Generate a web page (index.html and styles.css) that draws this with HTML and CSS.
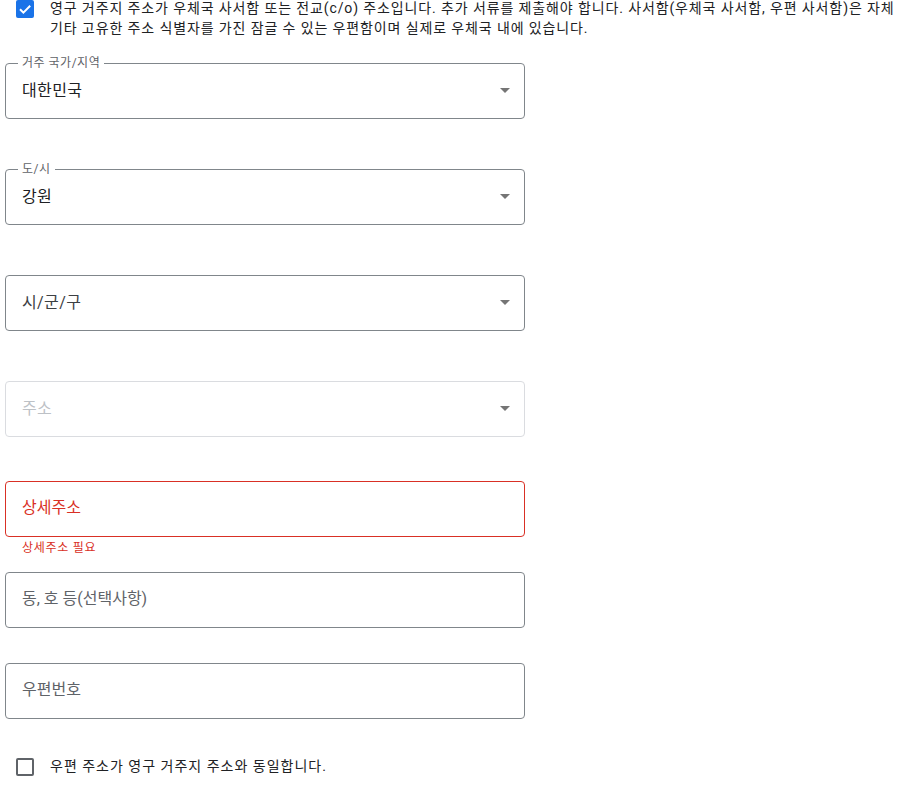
FILE: index.html
```html
<!DOCTYPE html>
<html lang="ko">
<head>
    <meta charset="UTF-8">
    <meta name="viewport" content="width=device-width, initial-scale=1.0">
    <title>주소 정보</title>
    <link rel="stylesheet" href="styles.css">
</head>
<body>

<div class="notice">
    <span class="box box-checked">
        <svg width="18" height="18" viewBox="0 0 18 18"><path d="M4 9.3l3.4 3.4L14.2 5.8" fill="none" stroke="#fff" stroke-width="2"/></svg>
    </span>
    <p class="notice-text">영구 거주지 주소가 우체국 사서함 또는 전교(c/o) 주소입니다. 추가 서류를 제출해야 합니다. 사서함(우체국 사서함, 우편 사서함)은 자체<br>기타 고유한 주소 식별자를 가진 잠글 수 있는 우편함이며 실제로 우체국 내에 있습니다.</p>
</div>

<form class="form">
    <!-- 거주 국가 -->
    <div class="field gap-50">
        <span class="float-label">거주 국가/지역</span>
        <span class="value">대한민국</span>
        <span class="arrow"></span>
    </div>

    <div class="field gap-50">
        <span class="float-label">도/시</span>
        <span class="value">강원</span>
        <span class="arrow"></span>
    </div>

    <div class="field gap-50">
        <span class="value placeholder-dark">시/군/구</span>
        <span class="arrow"></span>
    </div>

    <div class="field field-disabled gap-44">
        <span class="value">주소</span>
        <span class="arrow"></span>
    </div>

    <!-- 상세주소 (오류) -->
    <div class="field field-error">
        <input type="text" placeholder="상세주소">
    </div>
    <div class="helper-error">상세주소 필요</div>

    <div class="field gap-35">
        <input type="text" placeholder="동, 호 등(선택사항)">
    </div>

    <div class="field gap-38">
        <input type="text" placeholder="우편번호">
    </div>
</form>

<div class="same-row">
    <span class="box"></span>
    <span class="same-text">우편 주소가 영구 거주지 주소와 동일합니다.</span>
</div>

</body>
</html>
```

FILE: styles.css
```css
body {
    margin: 0;
    background-color: #fff;
    color: #202124;
    font-family: Roboto, "Noto Sans CJK KR", sans-serif;
}
.notice {
    display: flex;
    align-items: flex-start;
    gap: 16px;
    padding-left: 16px;
}
.box {
    display: block;
    flex: none;
    width: 18px;
    height: 18px;
    box-sizing: border-box;
    border: 2px solid #5f6368;
    border-radius: 2px;
}
.box-checked {
    border: none;
    background-color: #1a73e8;
}
.box svg {
    display: block;
}
.notice-text {
    margin: -2px 0 0 0;
    font-size: 14px;
    line-height: 20px;
    letter-spacing: 0.88px;
    color: #202124;
    white-space: nowrap;
}
.form {
    width: 520px;
    margin: 25px 0 0 5px;
}
.field {
    position: relative;
    height: 56px;
    box-sizing: border-box;
    border: 1px solid #80868b;
    border-radius: 4px;
    display: flex;
    align-items: center;
    padding: 0 16px;
}
.gap-50 { margin-bottom: 50px; }
.gap-44 { margin-bottom: 44px; }
.gap-38 { margin-bottom: 38px; }
.gap-35 { margin-bottom: 35px; }
.float-label {
    position: absolute;
    left: 12px;
    top: -9px;
    padding: 0 4px;
    background-color: #fff;
    font-size: 12px;
    line-height: 16px;
    letter-spacing: 0.5px;
    color: #5f6368;
}
.value {
    flex: 1;
    margin-bottom: 4px;
    font-size: 16px;
    letter-spacing: 0.4px;
    color: #202124;
}
.placeholder-dark {
    color: #3c4043;
}
.arrow {
    width: 0;
    height: 0;
    border-left: 5px solid transparent;
    border-right: 5px solid transparent;
    border-top: 5px solid #757575;
    margin-right: -2px;
    margin-top: -2px;
}
.field-disabled {
    border-color: #dadce0;
}
.field-disabled .value {
    color: #bdc1c6;
}
.field input {
    flex: 1;
    margin-bottom: 4px;
    border: none;
    outline: none;
    padding: 0;
    font-family: inherit;
    font-size: 16px;
    color: #202124;
    background: transparent;
}
.field input::placeholder {
    color: #5f6368;
}
.field-error {
    border-color: #d93025;
}
.field-error input::placeholder {
    color: #d93025;
}
.helper-error {
    margin: 3px 0 16px 17px;
    font-size: 12px;
    line-height: 16px;
    letter-spacing: 0.7px;
    color: #d93025;
}
.same-row {
    display: flex;
    align-items: center;
    gap: 16px;
    padding-left: 16px;
}
.same-text {
    margin-top: -1px;
    font-size: 14px;
    line-height: 20px;
    letter-spacing: 1px;
    color: #202124;
}
```
